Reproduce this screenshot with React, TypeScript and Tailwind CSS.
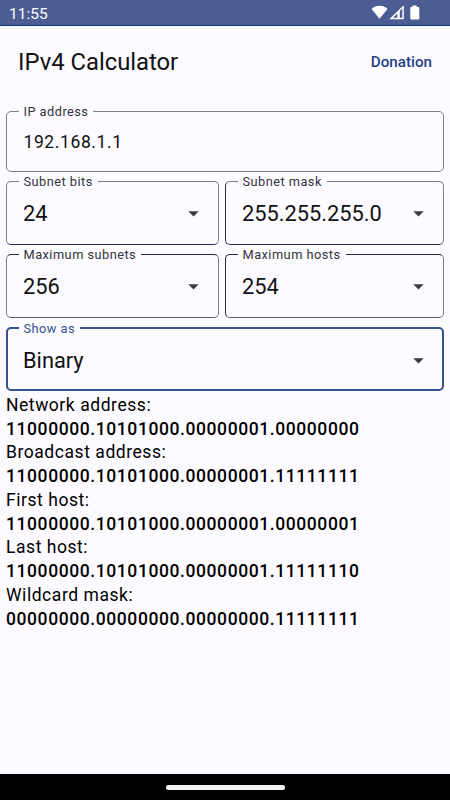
import clsx from "clsx";
import { ReactNode } from "react";

const results = [
	{ label: "Network address:", value: "11000000.10101000.00000001.00000000" },
	{ label: "Broadcast address:", value: "11000000.10101000.00000001.11111111" },
	{ label: "First host:", value: "11000000.10101000.00000001.00000001" },
	{ label: "Last host:", value: "11000000.10101000.00000001.11111110" },
	{ label: "Wildcard mask:", value: "00000000.00000000.00000000.11111111" },
];

const StatusBar = () => (
	<div className="flex h-[26px] items-center justify-between border-b border-[#0f3d85] bg-[#4b5d92] pl-[9px] pr-[29px] text-white">
		<span className="text-[15.5px] leading-none pt-[4px]">11:55</span>
		<svg
			className="mt-px"
			width="50"
			height="16"
			viewBox="0 0 50 16"
			fill="currentColor"
		>
			<path d="M0.5 4C4.8 -0.3 12.2 -0.3 16.5 4L8.5 13.8Z" />
			<path
				fillRule="evenodd"
				d="M32.8 0.3V14.3H18.2ZM31.3 3.6L28.8 6V12.8H31.3ZM26.4 8.5L22 12.8H26.4Z"
			/>
			<path d="M41.5 0.5h4.2v1.4h1.8q.8 0 .8.8v10.8q0 1-.9 1h-7.2q-.9 0-.9-1V2.7q0-.8.8-.8h1.4z" />
		</svg>
	</div>
);

interface FieldProps {
	label: string;
	className?: string;
	focused?: boolean;
	children: ReactNode;
}

const Field = ({ label, className, focused, children }: FieldProps) => (
	<fieldset
		className={clsx(
			"min-w-0 rounded-[5px]",
			focused ? "border-2 border-[#36528f]" : "border px-px",
			className
		)}
	>
		{/* The legend cuts the outline, its text is centred on the line */}
		<legend
			className={clsx(
				"ml-[10.5px] h-px px-[5px] text-[12.8px] leading-px tracking-[0.46px] whitespace-nowrap",
				focused ? "text-[#36528f]" : "text-[#33353e]"
			)}
		>
			{label}
		</legend>
		{children}
	</fieldset>
);

interface SelectFieldProps {
	label: string;
	value: string;
	className?: string;
	focused?: boolean;
}

const SelectField = ({ label, value, className, focused }: SelectFieldProps) => (
	<Field label={label} className={className} focused={focused}>
		<div className="flex h-[63px] items-center justify-between pl-[15px] pr-[18px]">
			<span className="pt-px text-[21.8px]">{value}</span>
			<svg width="11" height="6" viewBox="0 0 11 6" fill="#383a45">
				<path d="M0.3 0.3H10.7L5.5 5.5Z" />
			</svg>
		</div>
	</Field>
);

const App = () => {
	return (
		<div className="flex h-[800px] w-[450px] flex-col overflow-hidden bg-[#fdfbff] font-['Roboto',sans-serif] text-[#101114]">
			<StatusBar />

			<header className="flex h-[72px] items-center justify-between px-[18px]">
				<h1 className="pt-0.5 text-[23.8px]">IPv4 Calculator</h1>
				<button className="pt-px text-[15.2px] font-medium text-[#1f4187]">
					Donation
				</button>
			</header>

			<main className="flex-1 px-1.5 pt-[13px]">
				<Field label="IP address" className="h-[61px] border-[#7d7e86]">
					<div className="flex h-[60px] items-center pl-[15.5px] pt-px text-[17.5px] tracking-[0.6px]">
						192.168.1.1
					</div>
				</Field>

				<div className="mt-[9px] grid grid-cols-[213px_219px] gap-x-1.5 gap-y-[9px]">
					<SelectField
						label="Subnet bits"
						value="24"
						className="h-[64px] border-[#7d7e86] border-b-[#292b45]"
					/>
					<SelectField
						label="Subnet mask"
						value="255.255.255.0"
						className="h-[64px] border-[#7d7e86] border-b-[#292b45] border-l-[#292b45]"
					/>
					<SelectField
						label="Maximum subnets"
						value="256"
						className="h-[64px] border-[#7d7e86] border-b-[#5a5c6b] border-t-[#292b45]"
					/>
					<SelectField
						label="Maximum hosts"
						value="254"
						className="h-[64px] border-[#7d7e86] border-b-[#5a5c6b] border-l-[#292b45] border-t-[#292b45]"
					/>
				</div>

				<SelectField
					label="Show as"
					value="Binary"
					className="mt-[9px] h-[64px]"
					focused
				/>

				<div className="mt-[2.9px] text-[17.5px] leading-[23.75px] tracking-[0.55px] text-black">
					{results.map((item) => (
						<div key={item.label}>
							<p>{item.label}</p>
							<p className="font-medium tracking-[0.59px]">{item.value}</p>
						</div>
					))}
				</div>
			</main>

			<footer className="flex h-[26px] items-center justify-center bg-black">
				<div className="h-[5px] w-[119px] rounded-full bg-[#f3f3f3]" />
			</footer>
		</div>
	);
};

export default App;
